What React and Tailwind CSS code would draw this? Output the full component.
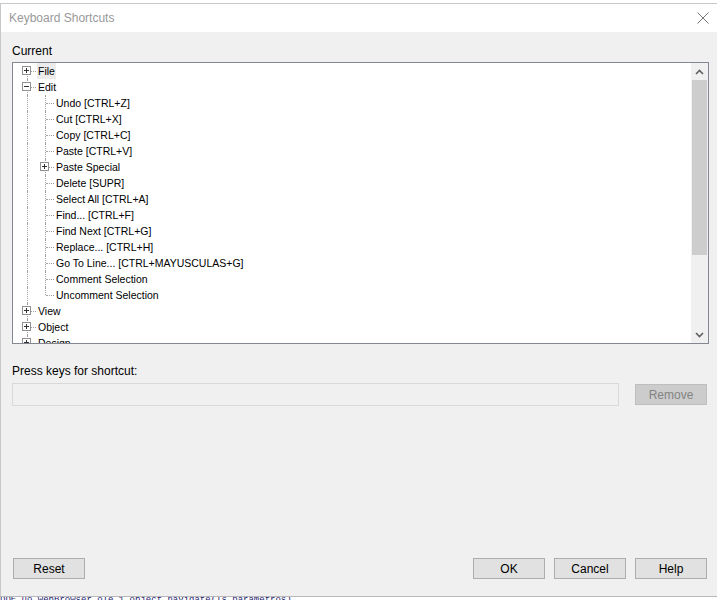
const ui = { fontFamily: '"Liberation Sans", Arial, sans-serif' };

const rows = [
  { label: "File", level: 0, exp: "+", first: true },
  { label: "Edit", level: 0, exp: "-" },
  { label: "Undo [CTRL+Z]", level: 1 },
  { label: "Cut [CTRL+X]", level: 1 },
  { label: "Copy [CTRL+C]", level: 1 },
  { label: "Paste [CTRL+V]", level: 1 },
  { label: "Paste Special", level: 1, exp: "+" },
  { label: "Delete [SUPR]", level: 1 },
  { label: "Select All [CTRL+A]", level: 1 },
  { label: "Find... [CTRL+F]", level: 1 },
  { label: "Find Next [CTRL+G]", level: 1 },
  { label: "Replace... [CTRL+H]", level: 1 },
  { label: "Go To Line... [CTRL+MAYUSCULAS+G]", level: 1 },
  { label: "Comment Selection", level: 1 },
  { label: "Uncomment Selection", level: 1, last: true },
  { label: "View", level: 0, exp: "+" },
  { label: "Object", level: 0, exp: "+" },
  { label: "Design", level: 0, exp: "+" },
  { label: "Window", level: 0, exp: "+" },
];

function Expander({ sign }) {
  return (
    <div className="absolute left-[4px] top-[3px] h-[9px] w-[9px] border border-[#919191] bg-white">
      <div className="absolute left-[1px] top-[3px] h-px w-[5px] bg-[#333]" />
      {sign === "+" && <div className="absolute left-[3px] top-[1px] h-[5px] w-px bg-[#333]" />}
    </div>
  );
}

// one 18px column of the tree's connector lines
function Cell({ vertical, half, top, branch, exp }) {
  return (
    <div className="relative h-4 w-[18px] shrink-0">
      {vertical && (
        <div
          className={`absolute left-[9px] border-l border-dotted border-[#a0a0a0] ${
            half ? "top-0 h-2" : top ? "top-2 bottom-0" : "top-0 bottom-0"
          }`}
        />
      )}
      {branch && <div className="absolute left-[10px] right-0 top-2 border-t border-dotted border-[#a0a0a0]" />}
      {exp && <Expander sign={exp} />}
    </div>
  );
}

function TreeRow({ row }) {
  return (
    <div className="flex h-4 items-center whitespace-nowrap">
      <div className="w-[5px] shrink-0" />
      {row.level === 0 ? (
        <Cell vertical top={row.first} branch exp={row.exp} />
      ) : (
        <>
          <Cell vertical />
          <Cell vertical half={row.last} branch exp={row.exp} />
        </>
      )}
      <span
        className={`ml-px px-px text-[10.5px] leading-4 text-black ${row.label === "File" ? "bg-[#ececec]" : ""}`}
      >
        {row.label}
      </span>
    </div>
  );
}

function Button({ children, disabled, className = "" }) {
  return (
    <div
      className={`flex h-[21px] w-[72px] shrink-0 items-center justify-center border text-[12px] ${
        disabled ? "border-[#bfbfbf] bg-[#cccccc] text-[#838383]" : "border-[#adadad] bg-[#e1e1e1] text-black"
      } ${className}`}
    >
      {children}
    </div>
  );
}

export default function App() {
  return (
    <div className="flex h-[600px] w-[717px] flex-col overflow-hidden bg-white" style={ui}>
      <div className="h-[4px] shrink-0 border-b border-[#c8c8c8] bg-white" />

      <div className="flex flex-1 flex-col border-l border-[#c8c8c8] bg-[#f0f0f0]">
        {/* title bar */}
        <div className="flex h-[28px] shrink-0 items-center justify-between bg-white pl-[8px] pr-[8px]">
          <span className="text-[12px] text-[#999999]">Keyboard Shortcuts</span>
          <svg width="12" height="12" viewBox="0 0 12 12">
            <path d="M0.5 0.5 L11.5 11.5 M11.5 0.5 L0.5 11.5" stroke="#777" strokeWidth="1" />
          </svg>
        </div>

        <div className="flex flex-1 flex-col pl-[11px] pr-[10px]">
          <div className="mt-[12px] text-[12px] leading-[15px] text-black">Current</div>

          {/* command tree */}
          <div className="mt-[3px] flex h-[282px] w-[697px] border border-[#828790] bg-white">
            <div className="flex-1 overflow-hidden">
              {rows.map((r) => (
                <TreeRow key={r.label} row={r} />
              ))}
            </div>
            <div className="flex w-[17px] flex-col bg-[#f0f0f0]">
              <div className="flex h-[17px] items-center justify-center">
                <svg width="9" height="6" viewBox="0 0 9 6">
                  <path d="M1 5 L4.5 1.5 L8 5" fill="none" stroke="#606060" strokeWidth="1.6" />
                </svg>
              </div>
              <div className="mx-px h-[175px] bg-[#cdcdcd]" />
              <div className="flex-1" />
              <div className="flex h-[17px] items-center justify-center">
                <svg width="9" height="6" viewBox="0 0 9 6">
                  <path d="M1 1 L4.5 4.5 L8 1" fill="none" stroke="#606060" strokeWidth="1.6" />
                </svg>
              </div>
            </div>
          </div>

          <div className="mt-[20px] text-[12px] leading-[15px] text-black">Press keys for shortcut:</div>
          <div className="mt-[4px] flex items-center">
            <div className="h-[23px] w-[607px] border border-[#d9d9d9] bg-[#f0f0f0]" />
            <div className="flex-1" />
            <Button disabled>Remove</Button>
          </div>

          <div className="flex-1" />

          <div className="mb-[17px] flex items-center">
            <Button className="ml-px">Reset</Button>
            <div className="flex-1" />
            <Button>OK</Button>
            <Button className="ml-[9px]">Cancel</Button>
            <Button className="ml-[9px]">Help</Button>
          </div>
        </div>
      </div>

      {/* editor behind the dialog */}
      <div className="h-[4px] shrink-0 overflow-hidden border-t border-[#b8b8b8] bg-white">
        <div
          className="-mt-[1px] whitespace-nowrap text-[9px] leading-[9px] text-[#1a1a6e]"
          style={{ fontFamily: '"Liberation Mono", monospace' }}
        >
          DDE.uo_webBrowser.ole_1.object.navigate(ls_parametros)
        </div>
      </div>
    </div>
  );
}
